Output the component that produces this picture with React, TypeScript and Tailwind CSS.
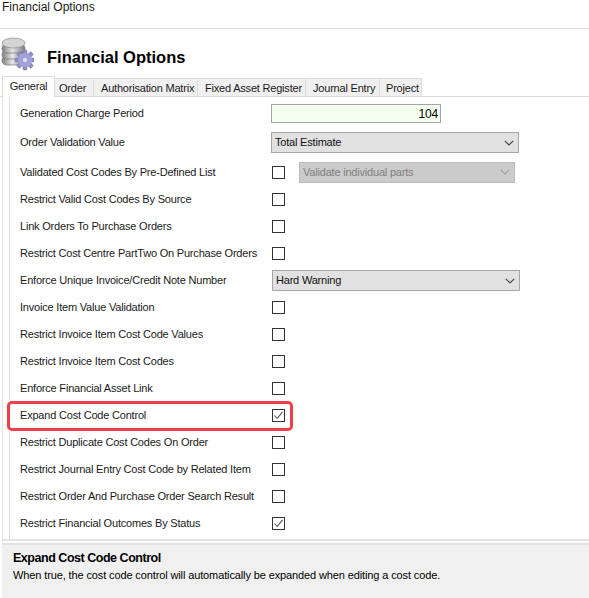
const font = "font-['Liberation_Sans',Arial,sans-serif]";

const Check = ({ checked }: { checked?: boolean }) => (
	<span className="flex h-[13px] w-[13px] items-center justify-center border border-[#333333] bg-white">
		{checked && (
			<svg width="11" height="11" viewBox="0 0 11 11" fill="none">
				<path d="M1.5 5.5 L4.2 8.5 L9.5 1.8" stroke="#555555" strokeWidth="1.1" />
			</svg>
		)}
	</span>
);

const Chevron = ({ color }: { color: string }) => (
	<svg width="10" height="6" viewBox="0 0 10 6" fill="none">
		<path d="M0.8 0.8 L5 5 L9.2 0.8" stroke={color} strokeWidth="1.2" />
	</svg>
);

const Select = ({ value, className, disabled }: { value: string; className: string; disabled?: boolean }) => (
	<div
		className={`flex h-[21px] items-center justify-between border pl-[3px] pr-[4px] ${
			disabled ? "border-[#bcbcbc] bg-[#cbcbcb] text-[#808080]" : "border-[#a6a6a6] bg-[#e1e1e1] text-[#111111]"
		} ${className}`}
	>
		<span>{value}</span>
		<Chevron color={disabled ? "#a0a0a0" : "#444444"} />
	</div>
);

const logo = (
	<svg width="33" height="35" viewBox="0 0 33 35">
		<defs>
			<linearGradient id="disk" x1="0" x2="1" y1="0" y2="0">
				<stop offset="0" stopColor="#7f7f7f" />
				<stop offset="0.45" stopColor="#e6e6e6" />
				<stop offset="1" stopColor="#7c7c7c" />
			</linearGradient>
		</defs>
		<rect x="1" y="20" width="23" height="9" rx="4.5" fill="url(#disk)" stroke="#666666" strokeWidth="0.6" />
		<rect x="1" y="14" width="23" height="9" rx="4.5" fill="url(#disk)" stroke="#666666" strokeWidth="0.6" />
		<rect x="1" y="8" width="23" height="9" rx="4.5" fill="url(#disk)" stroke="#666666" strokeWidth="0.6" />
		<ellipse cx="12.5" cy="7" rx="11.5" ry="5" fill="#d4d4d4" stroke="#808080" strokeWidth="0.6" />
		<g fill="#8f8fc8" stroke="#6c6ca6" strokeWidth="0.5">
			<rect x="22" y="14" width="4" height="20" rx="1" />
			<rect x="14" y="22" width="20" height="4" rx="1" />
			<rect x="22" y="14" width="4" height="20" rx="1" transform="rotate(45 24 24)" />
			<rect x="22" y="14" width="4" height="20" rx="1" transform="rotate(-45 24 24)" />
		</g>
		<circle cx="24" cy="24" r="7" fill="#a3a3d8" />
		<circle cx="24" cy="24" r="2.8" fill="#dcdcf0" stroke="#7a7ab0" strokeWidth="0.5" />
	</svg>
);

const tabs = [
	{ label: "Order", width: "w-[39px] pl-[4px]" },
	{ label: "Authorisation Matrix", width: "w-[104px] pl-[7px]" },
	{ label: "Fixed Asset Register", width: "w-[108px] pl-[7px]" },
	{ label: "Journal Entry", width: "w-[74px] pl-[7px]" },
	{ label: "Project", width: "w-[42px] pl-[6px]" },
];

const rows = [
	{ label: "Restrict Valid Cost Codes By Source" },
	{ label: "Link Orders To Purchase Orders" },
	{ label: "Restrict Cost Centre PartTwo On Purchase Orders" },
];

const rowsAfter = [
	{ label: "Invoice Item Value Validation" },
	{ label: "Restrict Invoice Item Cost Code Values" },
	{ label: "Restrict Invoice Item Cost Codes" },
	{ label: "Enforce Financial Asset Link" },
];

const rowsEnd = [
	{ label: "Restrict Duplicate Cost Codes On Order" },
	{ label: "Restrict Journal Entry Cost Code by Related Item" },
	{ label: "Restrict Order And Purchase Order Search Result" },
	{ label: "Restrict Financial Outcomes By Status", checked: true },
];

const Row = ({ label, children, height = "h-[27px]" }: { label: string; children: React.ReactNode; height?: string }) => (
	<div className={`flex items-center ${height}`}>
		<span className="w-[252px] shrink-0 whitespace-nowrap">{label}</span>
		{children}
	</div>
);

const CheckRow = ({ label, checked }: { label: string; checked?: boolean }) => (
	<Row label={label}>
		<Check checked={checked} />
	</Row>
);

export default function App() {
	return (
		<div className={`${font} flex h-[598px] w-[589px] flex-col overflow-hidden bg-white text-[11px] tracking-[-0.2px] text-[#1a1a1a]`}>
			<div className="h-[29px] shrink-0 border-b border-[#dddddd] pl-[2px] text-[12px] leading-[14px] tracking-normal">Financial Options</div>

			<div className="flex h-[47px] shrink-0 pl-[1px] pt-[7px]">
				{logo}
				<span className="ml-[13px] pt-[11px] text-[16.5px] font-bold leading-[20px] tracking-normal text-black">Financial Options</span>
			</div>

			<div className="flex h-[21px] shrink-0 items-end border-b border-[#dcdcdc] pl-[2px]">
				<div className="z-10 -mb-px flex h-[21px] w-[53px] items-center justify-center border border-b-0 border-[#dcdcdc] bg-white pb-[2px]">General</div>
				{tabs.map((t) => (
					<div key={t.label} className={`flex h-[18px] items-center whitespace-nowrap border-r border-t border-[#dcdcdc] bg-[#f0f0f0] pt-[1px] ${t.width}`}>
						{t.label}
					</div>
				))}
			</div>

			<div className="ml-[2px] h-[444px] shrink-0 border-b-2 border-l border-[#e4e4e4] pl-[6px]">
				<div className="h-full border-l border-[#dcdcdc] pl-[10px]">
					<div className="pt-[3px]">
						<Row label="Generation Charge Period">
							<div className="-ml-px flex h-[19px] w-[170px] items-center justify-end border border-[#a3a3a3] bg-[#f5fff0] pr-[2px] text-[12px] text-black">104</div>
						</Row>
						<Row label="Order Validation Value" height="h-[31px]">
							<Select value="Total Estimate" className="-ml-px w-[248px]" />
						</Row>
						<Row label="Validated Cost Codes By Pre-Defined List" height="h-[28px]">
							<Check />
							<Select value="Validate individual parts" className="ml-[14px] w-[216px]" disabled />
						</Row>
						{rows.map((r) => (
							<CheckRow key={r.label} label={r.label} />
						))}
						<Row label="Enforce Unique Invoice/Credit Note Number">
							<Select value="Hard Warning" className="w-[248px]" />
						</Row>
						{rowsAfter.map((r) => (
							<CheckRow key={r.label} label={r.label} />
						))}
						<div className="relative">
							<CheckRow label="Expand Cost Code Control" checked />
							<div className="absolute -left-[13px] -top-px h-[30px] w-[286px] rounded-[5px] border-[3.5px] border-[#ee4048]" />
						</div>
						{rowsEnd.map((r) => (
							<CheckRow key={r.label} label={r.label} checked={r.checked} />
						))}
					</div>
				</div>
			</div>

			<div className="ml-[2px] mt-[2px] flex-1 border-t-2 border-[#e2e2e2] bg-[#f0f0f0] pl-[11px] pt-[6px]">
				<div className="text-[12.5px] font-bold leading-[15px] tracking-[-0.47px] text-black">Expand Cost Code Control</div>
				<div className="mt-[2px] text-[11px] leading-[14px] tracking-[-0.12px] text-black">When true, the cost code control will automatically be expanded when editing a cost code.</div>
			</div>
		</div>
	);
}
